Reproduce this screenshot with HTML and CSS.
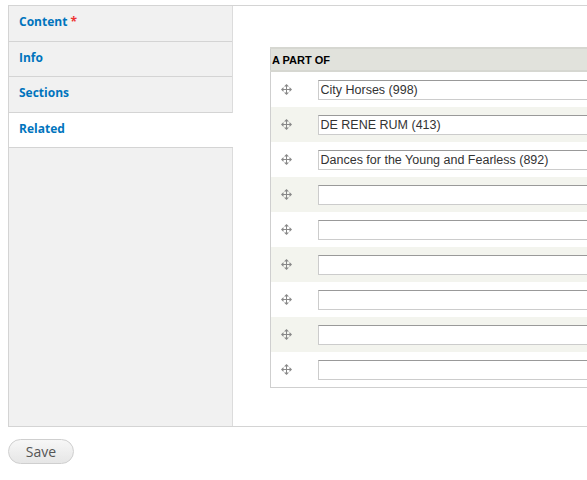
FILE: index.html
```html
<!DOCTYPE html>
<html lang="en">
<head>
    <meta charset="UTF-8">
    <title>Edit</title>
    <link rel="stylesheet" href="styles.css">
</head>
<body>
    <div class="vertical-tabs">
        <ul class="tab-list">
            <li class="tab"><a href="#">Content</a> <span class="required">*</span></li>
            <li class="tab"><a href="#">Info</a></li>
            <li class="tab"><a href="#">Sections</a></li>
            <li class="tab selected"><a href="#">Related</a></li>
        </ul>
        <div class="tab-pane">
            <table class="field-table">
                <thead>
                    <tr><th colspan="2">A PART OF</th></tr>
                </thead>
                <tbody id="rows"></tbody>
            </table>
        </div>
    </div>

    <button class="save">Save</button>

    <script>
        const values = ['City Horses (998)', 'DE RENE RUM (413)', 'Dances for the Young and Fearless (892)', '', '', '', '', '', ''];
        const handle = '<svg width="11" height="11" viewBox="0 0 11 11"><g fill="#888"><rect x="5" y="1" width="1" height="9"/><rect x="1" y="5" width="9" height="1"/><path d="M5.5 0 L8 2.5 L3 2.5 Z"/><path d="M5.5 11 L8 8.5 L3 8.5 Z"/><path d="M0 5.5 L2.5 3 L2.5 8 Z"/><path d="M11 5.5 L8.5 3 L8.5 8 Z"/></g></svg>';
        const tbody = document.getElementById('rows');
        values.forEach(function(v, i) {
            const tr = document.createElement('tr');
            tr.className = i % 2 ? 'even' : 'odd';
            tr.innerHTML = '<td class="handle">' + handle + '</td><td class="value"><input type="text" value="' + v + '"></td>';
            tbody.appendChild(tr);
        });
    </script>
</body>
</html>
```

FILE: styles.css
```css
html {
    overflow: hidden;
}
body {
    margin: 0;
    padding: 5px 0 0 8px;
    font-family: "Open Sans", Arial, sans-serif;
    background: #fff;
}
.vertical-tabs {
    display: flex;
    width: 700px;
    border: 1px solid #d4d4d4;
    border-right: none;
}
.tab-list {
    list-style: none;
    margin: 0;
    padding: 0;
    width: 223px;
    flex-shrink: 0;
    background: #f1f1f1;
    border-right: 1px solid #dcdcdc;
}
.tab {
    height: 34.5px;
    line-height: 31px;
    padding-left: 10px;
    border-bottom: 1px solid #d4d4d4;
    font-size: 12px;
    font-weight: 700;
}
.tab.selected {
    background: #fff;
    margin-right: -1px;
}
.tab a {
    color: #0074bd;
    text-decoration: none;
}
.required {
    color: #e33;
}
.tab-pane {
    flex: 1;
    padding: 41px 0 38px 37px;
}
.field-table {
    border-collapse: collapse;
    width: 500px;
    border: 1px solid #cfcfcf;
    font-family: Arial, "Liberation Sans", sans-serif;
}
.field-table th {
    text-align: left;
    background: #e1e2dc;
    border-top: 2px solid #d6d7d1;
    border-bottom: 2px solid #d6d7d1;
    height: 21px;
    padding: 0 1px;
    font-size: 11px;
    font-weight: 700;
    color: #000;
}
.field-table tr.odd {
    background: #fff;
}
.field-table tr.even {
    background: #f3f4ee;
}
.field-table td {
    height: 35px;
    padding: 0;
}
.handle {
    width: 47px;
    padding-left: 10px !important;
    box-sizing: border-box;
}
.handle svg {
    display: block;
}
.value input {
    display: block;
    width: 400px;
    height: 20px;
    box-sizing: border-box;
    margin: 0;
    padding: 0 2px;
    border: 1px solid #ccc;
    border-top-color: #999;
    font-family: Arial, "Liberation Sans", sans-serif;
    font-size: 12.5px;
    color: #333;
    background: #fff;
}
.save {
    display: block;
    margin-top: 12px;
    width: 66px;
    height: 25px;
    border: 1px solid #cfcfcf;
    border-radius: 13px;
    background: linear-gradient(#f7f7f7, #e6e6e6);
    font-family: "Open Sans", Arial, sans-serif;
    font-size: 14px;
    color: #555;
    padding: 0;
}
```
